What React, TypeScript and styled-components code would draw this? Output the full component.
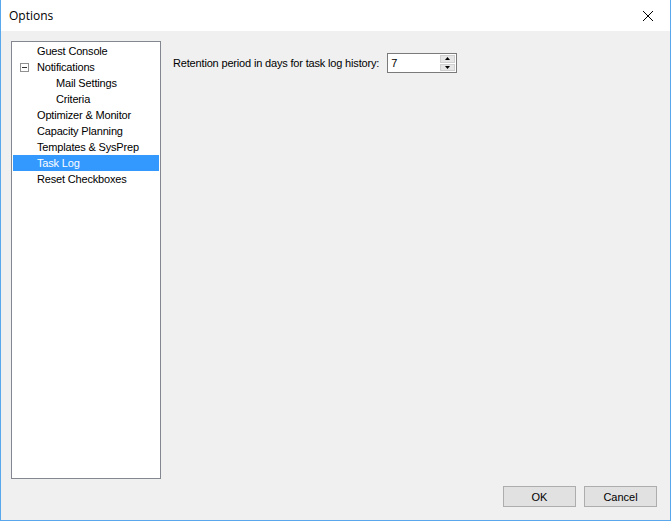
import React from 'react';
import styled, { createGlobalStyle } from 'styled-components';

const GlobalStyle = createGlobalStyle`
  html, body {
    margin: 0;
    padding: 0;
    background: #fff;
  }
  body {
    font-family: "Liberation Sans", Arial, sans-serif;
    font-size: 11px;
    letter-spacing: -0.17px;
    color: #000;
  }
`

const Window = styled.div`
  width: 671px;
  height: 521px;
  box-sizing: border-box;
  border: 1px solid #5aa7ec;
  border-top: none;
  display: flex;
  flex-direction: column;
  background: #f0f0f0;
`

const TitleBar = styled.div`
  height: 31px;
  flex: none;
  background: #fff;
  display: flex;
  align-items: center;
  justify-content: space-between;
  padding: 0 8px 0 8px;
  font-family: "Open Sans", "Liberation Sans", sans-serif;
  font-size: 12px;
  letter-spacing: 0;
`

const CloseButton = styled.div`
  width: 24px;
  height: 24px;
  display: flex;
  align-items: center;
  justify-content: center;
  margin-right: 2px;
`

const Body = styled.div`
  flex: 1;
  display: flex;
  flex-direction: column;
  padding: 10px 13px 13px 10px;
`

const Main = styled.div`
  flex: 1;
  display: flex;
  gap: 12px;
`

const Tree = styled.div`
  width: 150px;
  box-sizing: border-box;
  border: 1px solid #828790;
  background: #fff;
  padding: 1px 1px;
  display: flex;
  flex-direction: column;
`

const Row = styled.div<{ $indent: number; $selected?: boolean }>`
  height: 16px;
  display: flex;
  align-items: center;
  padding-left: ${p => p.$indent}px;
  background: ${p => (p.$selected ? '#3399ff' : 'transparent')};
  color: ${p => (p.$selected ? '#fff' : '#000')};
  white-space: nowrap;
  position: relative;
`

const Expander = styled.span`
  position: absolute;
  left: 7px;
  top: 4px;
  width: 7px;
  height: 7px;
  border: 1px solid #919191;
  background: #fff;
  &::after {
    content: '';
    position: absolute;
    left: 1px;
    top: 3px;
    width: 5px;
    height: 1px;
    background: #333;
  }
`

const Settings = styled.div`
  padding-top: 12px;
`

const Field = styled.div`
  display: flex;
  align-items: center;
  gap: 8px;
`

const Spinner = styled.div`
  width: 70px;
  height: 20px;
  box-sizing: border-box;
  border: 1px solid #7a7a7a;
  background: #fff;
  display: flex;
  align-items: stretch;
  padding: 1px;
`

const SpinValue = styled.div`
  flex: 1;
  padding-left: 2px;
  display: flex;
  align-items: center;
`

const SpinButtons = styled.div`
  width: 15px;
  display: flex;
  flex-direction: column;
  gap: 1px;
`

const SpinButton = styled.div`
  flex: 1;
  background: #e6e6e6;
  border: 1px solid #d0d0d0;
  display: flex;
  align-items: center;
  justify-content: center;
`

const Footer = styled.div`
  display: flex;
  justify-content: flex-end;
  gap: 8px;
  padding-top: 7px;
`

const Button = styled.button`
  width: 73px;
  height: 21px;
  box-sizing: border-box;
  border: 1px solid #adadad;
  background: #e1e1e1;
  font-family: "Liberation Sans", Arial, sans-serif;
  font-size: 11px;
  color: #000;
  padding: 0;
`

const items = [
  { label: 'Guest Console', indent: 24 },
  { label: 'Notifications', indent: 24, expander: true },
  { label: 'Mail Settings', indent: 43 },
  { label: 'Criteria', indent: 43 },
  { label: 'Optimizer & Monitor', indent: 24 },
  { label: 'Capacity Planning', indent: 24 },
  { label: 'Templates & SysPrep', indent: 24 },
  { label: 'Task Log', indent: 24, selected: true },
  { label: 'Reset Checkboxes', indent: 24 },
];

export default function App() {
  return (
    <>
      <GlobalStyle />
      <Window>
        <TitleBar>
          <span>Options</span>
          <CloseButton>
            <svg width="12" height="12" viewBox="0 0 12 12">
              <path d="M1 1L11 11M11 1L1 11" stroke="#000" strokeWidth="1" />
            </svg>
          </CloseButton>
        </TitleBar>
        <Body>
          <Main>
            <Tree>
              {items.map(it => (
                <Row key={it.label} $indent={it.indent} $selected={it.selected}>
                  {it.expander && <Expander />}
                  {it.label}
                </Row>
              ))}
            </Tree>
            <Settings>
              <Field>
                <span>Retention period in days for task log history:</span>
                <Spinner>
                  <SpinValue>7</SpinValue>
                  <SpinButtons>
                    <SpinButton>
                      <svg width="5" height="3" viewBox="0 0 5 3"><path d="M2.5 0L5 3H0Z" fill="#000" /></svg>
                    </SpinButton>
                    <SpinButton>
                      <svg width="5" height="3" viewBox="0 0 5 3"><path d="M0 0H5L2.5 3Z" fill="#000" /></svg>
                    </SpinButton>
                  </SpinButtons>
                </Spinner>
              </Field>
            </Settings>
          </Main>
          <Footer>
            <Button>OK</Button>
            <Button>Cancel</Button>
          </Footer>
        </Body>
      </Window>
    </>
  );
}
